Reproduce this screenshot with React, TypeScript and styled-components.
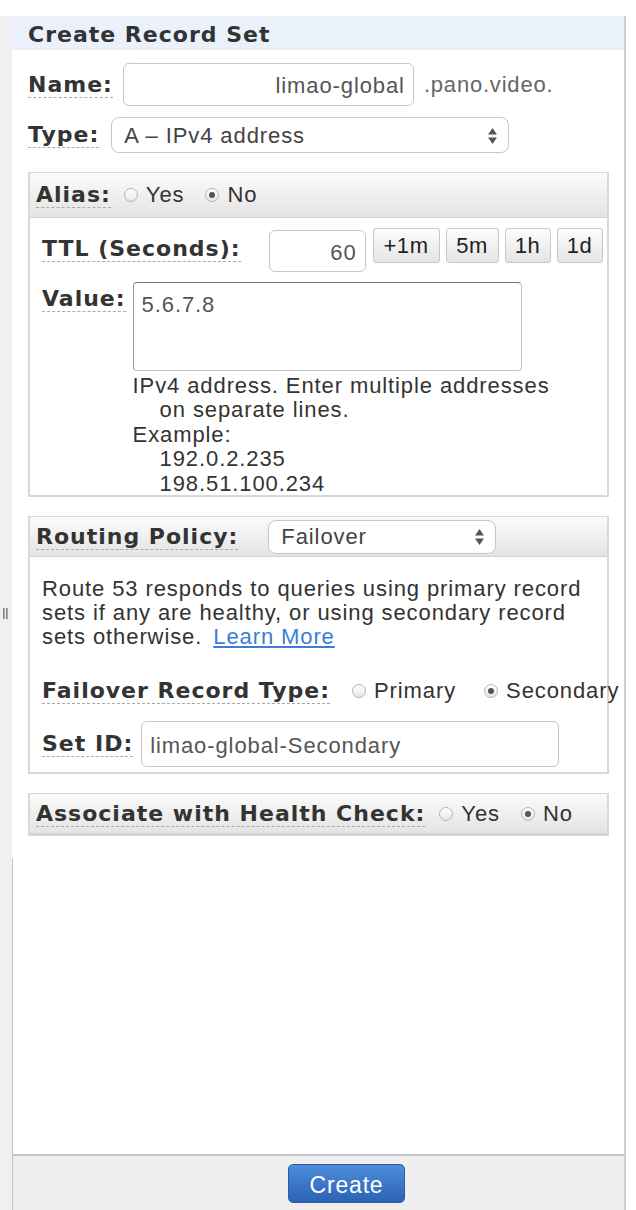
import React from "react";
import styled, { createGlobalStyle } from "styled-components";

const GlobalStyle = createGlobalStyle`
  html, body { margin: 0; padding: 0; background: #fff; }
  body { font-family: "Liberation Sans", Arial, sans-serif; color: #333; }
  * { box-sizing: border-box; }
`;

const Page = styled.div`
  display: flex;
  height: 1210px;
  padding-top: 16px;
  background: #fff;
`;

const Strip = styled.div`
  width: 12px;
  flex-shrink: 0;
  background: #f0f0f0;
  display: flex;
  align-items: center;
  justify-content: center;
  padding-right: 2px;
`;

const Grip = styled.div`
  display: flex;
  gap: 1px;
  & > span {
    width: 2px;
    height: 11px;
    background: linear-gradient(90deg, #777, #bbb);
  }
`;

const Main = styled.div`
  width: 614px;
  display: flex;
  flex-direction: column;
  border-right: 2px solid #cfcfcf;
`;

const Header = styled.div`
  height: 34px;
  background: #eaf1fb;
  padding-left: 16px;
  padding-top: 2px;
  display: flex;
  align-items: center;
  font-family: "DejaVu Sans", Verdana, sans-serif;
  font-weight: bold;
  font-size: 22px;
  letter-spacing: 1px;
  color: #333;
`;

const Form = styled.div`
  display: flex;
  flex-direction: column;
  padding-left: 16px;
`;

const Label = styled.span<{ $gap?: number }>`
  font-family: "DejaVu Sans", Verdana, sans-serif;
  font-weight: bold;
  font-size: 22px;
  letter-spacing: 1px;
  color: #333;
  line-height: 25px;
  border-bottom: 1px dashed #aaa;
  white-space: nowrap;
  margin-right: ${(p) => p.$gap ?? 10}px;
`;

const Row = styled.div<{ $top: number; $h: number }>`
  display: flex;
  align-items: center;
  margin-top: ${(p) => p.$top}px;
  height: ${(p) => p.$h}px;
  white-space: nowrap;
`;

const TextInput = styled.div<{ $w: number; $h: number; $align?: string }>`
  width: ${(p) => p.$w}px;
  height: ${(p) => p.$h}px;
  flex-shrink: 0;
  border: 1px solid #c6c6c6;
  border-radius: 6px;
  background: #fff;
  display: flex;
  align-items: center;
  justify-content: ${(p) => (p.$align === "right" ? "flex-end" : "flex-start")};
  padding: 3px 8px 0;
  font-size: 22px;
  letter-spacing: 0.9px;
  color: #555;
  white-space: nowrap;
`;

const Suffix = styled.span`
  font-size: 22px;
  letter-spacing: 0.8px;
  color: #666;
  margin-left: 10px;
`;

const Select = styled.div<{ $w: number; $h: number }>`
  width: ${(p) => p.$w}px;
  height: ${(p) => p.$h}px;
  flex-shrink: 0;
  border: 1px solid #c6c6c6;
  border-radius: 8px;
  background: #fff;
  display: flex;
  align-items: center;
  justify-content: space-between;
  padding: 1px 10px 0 12px;
  font-size: 22px;
  letter-spacing: 0.9px;
  color: #444;
`;

const Arrows = () => (
  <svg width="11" height="18" viewBox="0 0 11 18">
    <path d="M5.5 1 L10 7.5 L1 7.5 Z" fill="#555" />
    <path d="M5.5 17 L10 10.5 L1 10.5 Z" fill="#555" />
  </svg>
);

const Panel = styled.div<{ $top: number }>`
  margin-top: ${(p) => p.$top}px;
  width: 581px;
  border: 2px solid #d8d8d8;
  border-top-width: 1px;
  display: flex;
  flex-direction: column;
`;

const PanelHead = styled.div<{ $h: number }>`
  height: ${(p) => p.$h}px;
  background: linear-gradient(#fbfbfb, #e4e4e4);
  border-bottom: 1px solid #d2d2d2;
  display: flex;
  align-items: center;
  padding-left: 6px;
  white-space: nowrap;
`;

const PanelBody = styled.div<{ $pad: string }>`
  padding: ${(p) => p.$pad};
  display: flex;
  flex-direction: column;
`;

const RadioGroup = styled.label<{ $gap: number }>`
  display: inline-flex;
  align-items: center;
  font-size: 22px;
  letter-spacing: 0.9px;
  color: #333;
  white-space: nowrap;
  margin-right: ${(p) => p.$gap}px;
`;

const Dot = styled.span<{ $on?: boolean }>`
  width: 14px;
  height: 14px;
  flex-shrink: 0;
  border-radius: 50%;
  border: 1px solid #b4b4b4;
  background: linear-gradient(#ffffff, #e6e6e6);
  margin-right: 8px;
  display: inline-flex;
  align-items: center;
  justify-content: center;
  &::after {
    content: "";
    width: 6px;
    height: 6px;
    border-radius: 50%;
    background: ${(p) => (p.$on ? "#555" : "transparent")};
  }
`;

const Radio = ({ on, children, gap }: { on?: boolean; children: React.ReactNode; gap: number }) => (
  <RadioGroup $gap={gap}>
    <Dot $on={on} />
    {children}
  </RadioGroup>
);

const TtlRow = styled.div`
  display: flex;
  align-items: flex-start;
  height: 44px;
`;

const TtlLabelWrap = styled.div`
  margin-top: 8px;
  display: flex;
`;

const TtlInput = styled(TextInput)`
  margin-top: 2px;
`;

const QuickButtons = styled.div`
  display: flex;
  gap: 6px;
  margin-left: 7px;
`;

const Quick = styled.button<{ $w: number }>`
  width: ${(p) => p.$w}px;
  height: 35px;
  border: 1px solid #c8c8c8;
  border-radius: 3px;
  background: linear-gradient(#fdfdfd, #e4e4e4);
  font-family: "Liberation Sans", Arial, sans-serif;
  font-size: 22px;
  letter-spacing: 0.6px;
  color: #222;
  padding: 1px 0 0;
`;

const ValueRow = styled.div`
  display: flex;
  align-items: flex-start;
  margin-top: 10px;
`;

const ValueLabelWrap = styled.div`
  margin-top: 4px;
  display: flex;
`;

const ValueCol = styled.div`
  display: flex;
  flex-direction: column;
`;

const TextArea = styled.div`
  width: 389px;
  height: 89px;
  border: 1px solid #c4c4c4;
  border-top-color: #777;
  border-left-color: #999;
  border-radius: 4px;
  padding: 10px 8px 0;
  font-size: 22px;
  letter-spacing: 0.9px;
  color: #555;
  line-height: 24px;
`;

const Help = styled.div`
  font-size: 22px;
  letter-spacing: 0.9px;
  line-height: 24.4px;
  color: #333;
  padding: 3px 0 0;
  margin-bottom: -1px;
  white-space: nowrap;
`;

const Hang = styled.div`
  padding-left: 27px;
  text-indent: -27px;
`;

const Indented = styled.div`
  padding-left: 27px;
`;

const Para = styled.p`
  margin: 0;
  font-size: 22px;
  letter-spacing: 0.9px;
  line-height: 24px;
  color: #333;
  white-space: nowrap;
`;

const Link = styled.a`
  color: #3b7dd8;
  text-decoration: underline;
  margin-left: 4px;
`;

const Filler = styled.div`
  flex: 1;
  margin-top: 22px;
  border-left: 1px solid #c4c4c4;
`;

const Footer = styled.div`
  height: 56px;
  background: #efefef;
  border-top: 2px solid #c4c4c4;
  border-left: 1px solid #c4c4c4;
  display: flex;
  align-items: flex-start;
  padding: 8px 0 0 275px;
`;

const CreateButton = styled.button`
  width: 117px;
  height: 39px;
  border: 1px solid #2a5ca8;
  border-radius: 5px;
  background: linear-gradient(#4d8ddc, #2c62b4);
  color: #fff;
  font-family: "Liberation Sans", Arial, sans-serif;
  font-size: 23px;
  letter-spacing: 0.8px;
  padding: 4px 0 0;
`;

export default function App() {
  return (
    <>
      <GlobalStyle />
      <Page>
        <Strip>
          <Grip>
            <span />
            <span />
          </Grip>
        </Strip>
        <Main>
          <Header>Create Record Set</Header>
          <Form>
            <Row $top={13} $h={43}>
              <Label>Name:</Label>
              <TextInput $w={291} $h={43} $align="right">limao-global</TextInput>
              <Suffix>.pano.video.</Suffix>
            </Row>
            <Row $top={11} $h={36}>
              <Label $gap={12}>Type:</Label>
              <Select $w={398} $h={36}>
                <span>A – IPv4 address</span>
                <Arrows />
              </Select>
            </Row>

            <Panel $top={19}>
              <PanelHead $h={45}>
                <Label $gap={13}>Alias:</Label>
                <Radio gap={21}>Yes</Radio>
                <Radio on gap={0}>No</Radio>
              </PanelHead>
              <PanelBody $pad="10px 0 0 12px">
                <TtlRow>
                  <TtlLabelWrap>
                    <Label $gap={28}>TTL (Seconds):</Label>
                  </TtlLabelWrap>
                  <TtlInput $w={97} $h={42} $align="right">60</TtlInput>
                  <QuickButtons>
                    <Quick $w={67}>+1m</Quick>
                    <Quick $w={53}>5m</Quick>
                    <Quick $w={46}>1h</Quick>
                    <Quick $w={46}>1d</Quick>
                  </QuickButtons>
                </TtlRow>
                <ValueRow>
                  <ValueLabelWrap>
                    <Label $gap={7}>Value:</Label>
                  </ValueLabelWrap>
                  <ValueCol>
                    <TextArea>5.6.7.8</TextArea>
                    <Help>
                      <Hang>
                        IPv4 address. Enter multiple addresses
                        <br />
                        on separate lines.
                      </Hang>
                      <div>Example:</div>
                      <Indented>192.0.2.235</Indented>
                      <Indented>198.51.100.234</Indented>
                    </Help>
                  </ValueCol>
                </ValueRow>
              </PanelBody>
            </Panel>

            <Panel $top={19}>
              <PanelHead $h={40}>
                <Label $gap={30}>Routing Policy:</Label>
                <Select $w={228} $h={34}>
                  <span>Failover</span>
                  <Arrows />
                </Select>
              </PanelHead>
              <PanelBody $pad="20px 12px 5px 12px">
                <Para>
                  Route 53 responds to queries using primary record
                  <br />
                  sets if any are healthy, or using secondary record
                  <br />
                  sets otherwise. <Link>Learn More</Link>
                </Para>
                <Row $top={27} $h={30}>
                  <Label $gap={22}>Failover Record Type:</Label>
                  <Radio gap={28}>Primary</Radio>
                  <Radio on gap={0}>Secondary</Radio>
                </Row>
                <Row $top={15} $h={46}>
                  <Label $gap={8}>Set ID:</Label>
                  <TextInput $w={418} $h={46}>limao-global-Secondary</TextInput>
                </Row>
              </PanelBody>
            </Panel>

            <Panel $top={19}>
              <PanelHead $h={40}>
                <Label $gap={14}>Associate with Health Check:</Label>
                <Radio gap={21}>Yes</Radio>
                <Radio on gap={0}>No</Radio>
              </PanelHead>
            </Panel>
          </Form>
          <Filler />
          <Footer>
            <CreateButton>Create</CreateButton>
          </Footer>
        </Main>
      </Page>
    </>
  );
}
